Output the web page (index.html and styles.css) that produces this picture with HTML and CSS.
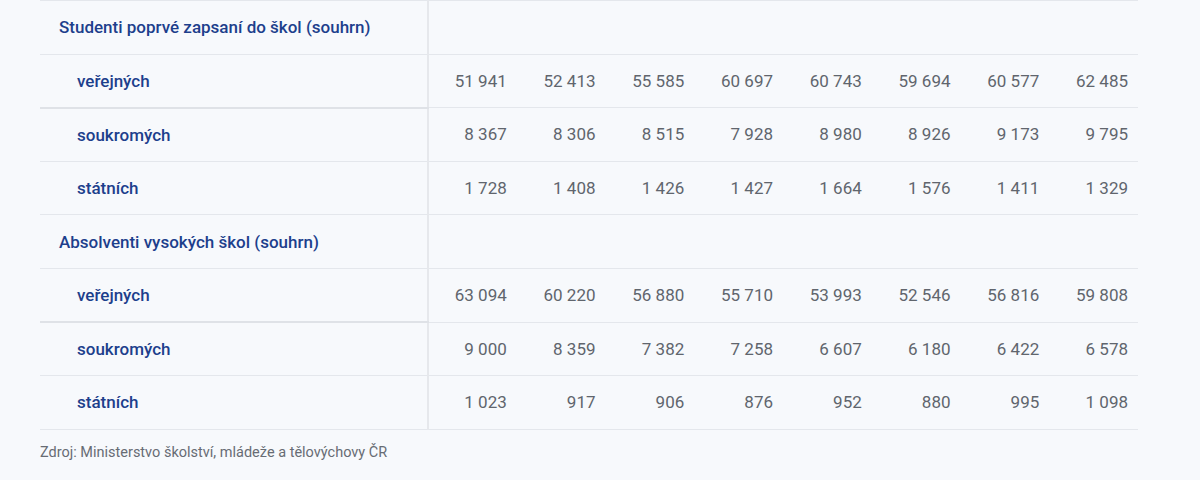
FILE: index.html
```html
<!DOCTYPE html>
<html lang="cs">
<head>
<meta charset="utf-8">
<link rel="stylesheet" href="styles.css">
</head>
<body>
<div class="wrap">
<table class="data">
<colgroup><col class="c-label"><col span="8"></colgroup>
<tbody>
<tr class="group"><th class="label">Studenti poprvé zapsaní do škol (souhrn)</th><td colspan="8"></td></tr>
<tr class="sub first"><th class="label">veřejných</th><td>51 941</td><td>52 413</td><td>55 585</td><td>60 697</td><td>60 743</td><td>59 694</td><td>60 577</td><td>62 485</td></tr>
<tr class="sub"><th class="label">soukromých</th><td>8 367</td><td>8 306</td><td>8 515</td><td>7 928</td><td>8 980</td><td>8 926</td><td>9 173</td><td>9 795</td></tr>
<tr class="sub"><th class="label">státních</th><td>1 728</td><td>1 408</td><td>1 426</td><td>1 427</td><td>1 664</td><td>1 576</td><td>1 411</td><td>1 329</td></tr>
<tr class="group"><th class="label">Absolventi vysokých škol (souhrn)</th><td colspan="8"></td></tr>
<tr class="sub first"><th class="label">veřejných</th><td>63 094</td><td>60 220</td><td>56 880</td><td>55 710</td><td>53 993</td><td>52 546</td><td>56 816</td><td>59 808</td></tr>
<tr class="sub"><th class="label">soukromých</th><td>9 000</td><td>8 359</td><td>7 382</td><td>7 258</td><td>6 607</td><td>6 180</td><td>6 422</td><td>6 578</td></tr>
<tr class="sub"><th class="label">státních</th><td>1 023</td><td>917</td><td>906</td><td>876</td><td>952</td><td>880</td><td>995</td><td>1 098</td></tr>
</tbody>
</table>
<p class="source">Zdroj: Ministerstvo školství, mládeže a tělovýchovy ČR</p>
</div>
</body>
</html>
```
FILE: styles.css
```css
html, body {
  margin: 0;
  padding: 0;
  background: #f7f9fc;
}
body {
  font-family: Roboto, "Liberation Sans", sans-serif;
}
.wrap {
  padding: 0 62px 0 40px;
}
.data {
  width: 1098px;
  border-collapse: collapse;
  table-layout: fixed;
  border-top: 1px solid #e4e7ec;
}
.c-label {
  width: 388px;
}
.data tr {
  height: 53.6px;
  border-bottom: 1px solid #e4e7ec;
}
.data tr.first .label {
  border-bottom: 2px solid #dfe2e7;
}
.label {
  text-align: left;
  font-weight: 500;
  font-size: 17px;
  color: #1d3f8c;
  border-right: 2px solid #e6e8ec;
  padding: 0;
}
.group .label {
  padding-left: 19px;
}
.sub .label {
  padding-left: 37px;
}
.data td {
  text-align: right;
  font-size: 17px;
  color: #60656d;
  padding: 0 10px 0 0;
}
.source {
  margin: 14px 0 0;
  font-size: 14.5px;
  color: #676c74;
}
```
